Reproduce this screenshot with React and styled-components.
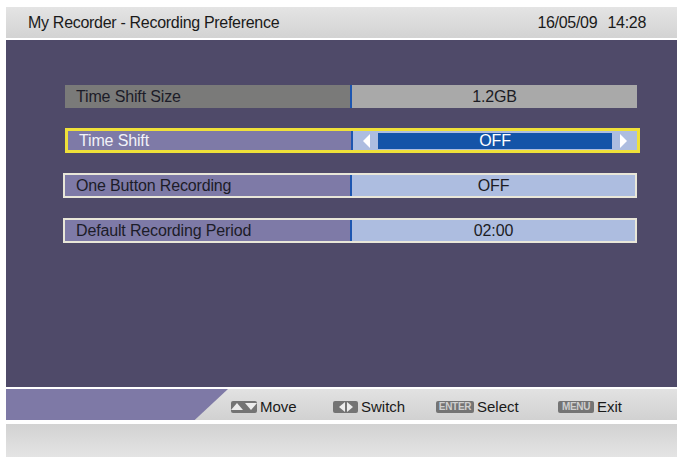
import styled, { createGlobalStyle } from "styled-components";

const GlobalStyle = createGlobalStyle`
  body {
    margin: 0;
    background: #ffffff;
    font-family: "Liberation Sans", Arial, sans-serif;
  }
`;

const Screen = styled.div`
  width: 671px;
  padding: 7px 2px 0 6px;
  display: flex;
  flex-direction: column;
`;

const TitleBar = styled.div`
  height: 31px;
  display: flex;
  align-items: center;
  justify-content: space-between;
  padding: 0 31px 0 22px;
  background: linear-gradient(#e4e4e4, #d3d3d3);
  font-size: 16px;
  letter-spacing: -0.3px;
  color: #1a1a1a;
  margin-bottom: 2px;
`;

const Clock = styled.span`
  word-spacing: 6px;
`;

const Panel = styled.div`
  height: 302px;
  background: #4f4a69;
  padding: 45px 0 0 59px;
  display: flex;
  flex-direction: column;
  gap: 20px;
  margin-bottom: 2px;
`;

const Row = styled.div`
  display: flex;
  box-sizing: border-box;
  font-size: 16px;
  letter-spacing: -0.15px;
  margin-left: ${(p) => (p.framed ? "-2px" : "0")};
  border: ${(p) =>
    p.focused ? "3px solid #efe13a" : p.framed ? "2px solid #e9e7d9" : "0"};
  width: ${(p) => (p.focused ? "575px" : p.framed ? "574px" : "572px")};
  height: ${(p) => (p.focused || p.framed ? "25px" : "23px")};
`;

const Label = styled.div`
  width: ${(p) => (p.focused ? "283px" : "285px")};
  display: flex;
  align-items: center;
  padding-left: 11px;
  box-sizing: border-box;
  background: ${(p) => (p.disabled ? "#7a7a79" : "#7e7aa7")};
  color: ${(p) => (p.focused ? "#f2f2f8" : "#1c1c28")};
`;

const Value = styled.div`
  flex: 1;
  display: flex;
  align-items: center;
  justify-content: center;
  border-left: 2px solid #1d56b0;
  background: ${(p) => (p.disabled ? "#a9a9a9" : "#adbde0")};
  color: #1c1c24;
`;

const Selector = styled.div`
  flex: 1;
  display: flex;
  align-items: center;
  gap: 8px;
  padding: 0 10px;
  border-left: 2px solid #1d56b0;
  background: #adbde0;
`;

const Arrow = styled.span`
  width: 0;
  height: 0;
  border-top: 7px solid transparent;
  border-bottom: 7px solid transparent;
  ${(p) =>
    p.dir === "left"
      ? "border-right: 7px solid #ffffff;"
      : "border-left: 7px solid #ffffff;"}
`;

const Choice = styled.div`
  flex: 1;
  height: 16px;
  background: #1454a8;
  color: #ffffff;
  display: flex;
  align-items: center;
  justify-content: center;
`;

const Footer = styled.div`
  position: relative;
  height: 31px;
  background: linear-gradient(#e2e2e2, #d1d1d1);
  display: flex;
  align-items: center;
  padding-left: 225px;
  margin-bottom: 4px;
  font-size: 15px;
  color: #1a1a1a;
`;

const Wedge = styled.div`
  position: absolute;
  left: 0;
  top: 0;
  bottom: 0;
  width: 222px;
  background: #7e79a6;
  clip-path: polygon(0 0, 100% 0, 85% 100%, 0 100%);
`;

const Hint = styled.div`
  display: flex;
  align-items: center;
  gap: 3px;
  width: ${(p) => p.w}px;
  padding-top: 4px;
`;

const Key = styled.span`
  display: inline-flex;
  align-items: center;
  justify-content: center;
  gap: 2px;
  width: ${(p) => p.w}px;
  height: 12px;
  border-radius: 2px;
  background: #747474;
  color: #cfcfcf;
  font-size: 10px;
  font-weight: bold;
  letter-spacing: -0.3px;
  line-height: 12px;
`;

const Tri = styled.span`
  width: 0;
  height: 0;
  ${(p) =>
    p.dir === "up"
      ? "border-left: 6px solid transparent; border-right: 6px solid transparent; border-bottom: 7px solid #ececec;"
      : p.dir === "down"
      ? "border-left: 6px solid transparent; border-right: 6px solid transparent; border-top: 7px solid #ececec;"
      : p.dir === "left"
      ? "border-top: 5px solid transparent; border-bottom: 5px solid transparent; border-right: 6px solid #ececec;"
      : "border-top: 5px solid transparent; border-bottom: 5px solid transparent; border-left: 6px solid #ececec;"}
`;

const BottomBar = styled.div`
  height: 33px;
  background: linear-gradient(#d2d2d2, #e4e4e4);
`;

export default function App() {
  return (
    <>
      <GlobalStyle />
      <Screen>
        <TitleBar>
          <span>My Recorder - Recording Preference</span>
          <Clock>16/05/09 14:28</Clock>
        </TitleBar>
        <Panel>
          <Row>
            <Label disabled>Time Shift Size</Label>
            <Value disabled>1.2GB</Value>
          </Row>
          <Row focused>
            <Label focused>Time Shift</Label>
            <Selector>
              <Arrow dir="left" />
              <Choice>OFF</Choice>
              <Arrow dir="right" />
            </Selector>
          </Row>
          <Row framed>
            <Label>One Button Recording</Label>
            <Value>OFF</Value>
          </Row>
          <Row framed>
            <Label>Default Recording Period</Label>
            <Value>02:00</Value>
          </Row>
        </Panel>
        <Footer>
          <Wedge />
          <Hint w={102}>
            <Key w={26}>
              <Tri dir="up" />
              <Tri dir="down" />
            </Key>
            Move
          </Hint>
          <Hint w={103}>
            <Key w={25}>
              <Tri dir="left" />
              <Tri dir="right" />
            </Key>
            Switch
          </Hint>
          <Hint w={122}>
            <Key w={38}>ENTER</Key>
            Select
          </Hint>
          <Hint w={80}>
            <Key w={36}>MENU</Key>
            Exit
          </Hint>
        </Footer>
        <BottomBar />
      </Screen>
    </>
  );
}
